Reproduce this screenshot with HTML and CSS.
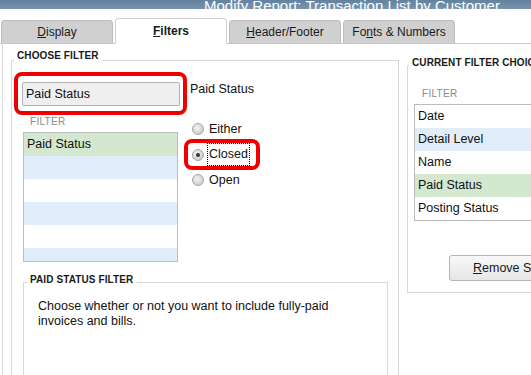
FILE: index.html
```html
<!DOCTYPE html>
<html lang="en">
<head>
 <meta charset="UTF-8">
 <meta name="viewport" content="width=device-width, initial-scale=1.0">
 <title>Modify Report: Transaction List by Customer</title>
 <link rel="stylesheet" href="styles.css">
</head>
<body>
 <div class="titlebar">
 <span class="title-text">Modify Report: Transaction List by Customer</span>
 </div>
 <div class="tabs">
 <div class="tab"><u>D</u>isplay</div>
 <div class="tab tab-active"><u>F</u>ilters</div>
 <div class="tab"><u>H</u>eader/Footer</div>
 <div class="tab">Fo<u>n</u>ts &amp; Numbers</div>
 </div>
 <div class="panel">
 <fieldset class="group group-choose">
 <legend class="group-title legend-choose">CHOOSE FILTER</legend>
 <div class="choose-top">
 <div class="highlight highlight-select">
 <div class="select-field">Paid Status</div>
 </div>
 <span class="select-caption">Paid Status</span>
 </div>
 <div class="choose-middle">
 <div class="filter-col">
 <div class="list-label">FILTER</div>
 <div class="list list-left">
 <div class="list-row row-selected">Paid Status</div>
 <div class="list-row row-alt"></div>
 <div class="list-row"></div>
 <div class="list-row row-alt"></div>
 <div class="list-row"></div>
 <div class="list-row row-alt"></div>
 </div>
 </div>
 <div class="radio-col">
 <label class="option">
 <span class="radio"></span>
 <span class="option-text">Either</span>
 </label>
 <div class="highlight highlight-radio">
 <label class="option option-plain">
 <span class="radio radio-checked"></span>
 <span class="option-text option-focus">Closed</span>
 </label>
 </div>
 <label class="option">
 <span class="radio"></span>
 <span class="option-text">Open</span>
 </label>
 </div>
 </div>
 <fieldset class="group group-detail">
 <legend class="group-title legend-detail">PAID STATUS FILTER</legend>
 <p class="detail-text">Choose whether or not you want to include fully-paid invoices and bills.</p>
 </fieldset>
 </fieldset>
 <fieldset class="group group-current">
 <legend class="group-title legend-current">CURRENT FILTER CHOICES</legend>
 <div class="current-body">
 <div class="list-label">FILTER</div>
 <div class="list list-right">
 <div class="list-row">Date</div>
 <div class="list-row row-alt">Detail Level</div>
 <div class="list-row">Name</div>
 <div class="list-row row-selected">Paid Status</div>
 <div class="list-row">Posting Status</div>
 </div>
 <button class="button"><u>R</u>emove Selected Filter</button>
 </div>
 </fieldset>
 </div>
</body>
</html>
```

FILE: styles.css
```css
* {
 margin: 0;
 padding: 0;
 box-sizing: border-box;
 font-family: "Liberation Sans", Arial, sans-serif;
}
body {
 width: 531px;
 height: 375px;
 overflow: hidden;
 background: #ffffff;
 color: #111111;
 font-size: 12px;
}
.titlebar {
 height: 9px;
 overflow: hidden;
 display: flex;
 align-items: flex-end;
 padding-left: 204px;
 background: linear-gradient(180deg, #6282a0 0%, #7894ad 100%);
}
.title-text {
 color: #ffffff;
 font-size: 15px;
 line-height: 15px;
 margin-bottom: -4px;
 white-space: nowrap;
}
.tabs {
 height: 35px;
 display: flex;
 align-items: flex-end;
 gap: 2px;
 padding-left: 1px;
 border-bottom: 1px solid #c9c9c9;
}
.tab {
 width: 112px;
 height: 23px;
 background: #d0d0d0;
 border: 1px solid #bdbdbd;
 border-bottom: none;
 border-radius: 4px 4px 0 0;
 text-align: center;
 font-size: 12px;
 line-height: 22px;
 color: #1a1a1a;
}
.tab-active {
 height: 26px;
 margin-bottom: -1px;
 background: #ffffff;
 border-color: #cfcfcf;
 font-weight: bold;
 line-height: 24px;
}
.panel {
 margin-left: 2px;
 height: 331px;
 border-left: 1px solid #d9d9d9;
 display: flex;
 align-items: flex-start;
 padding: 7px 0 0 8px;
}
.group {
 border: 1px solid #d9d9d9;
 min-width: 0;
}
.group-title {
 font-size: 10px;
 font-weight: bold;
 line-height: 10px;
 color: #1a1a1a;
 padding: 0 3px;
 letter-spacing: 0.1px;
}
.group-choose {
 width: 388px;
 height: 380px;
 flex-shrink: 0;
}
.legend-choose {
 margin-left: 2px;
 padding-bottom: 8px;
}
.choose-top {
 display: flex;
 align-items: flex-start;
 padding: 3px 0 0 2px;
}
.highlight {
 border: 4px solid #ee0000;
 border-radius: 8px;
}
.highlight-select {
 padding: 6px 3px 5px 4px;
}
.select-field {
 width: 158px;
 height: 24px;
 background: #efefef;
 border: 1px solid #b3b3b3;
 border-radius: 2px;
 padding-left: 3px;
 font-size: 12.5px;
 line-height: 22px;
}
.select-caption {
 margin: 10px 0 0 3px;
 font-size: 12.5px;
 line-height: 15px;
}
.choose-middle {
 display: flex;
 align-items: flex-start;
 margin-top: 1px;
 padding-left: 11px;
}
.list-label {
 font-size: 10px;
 line-height: 12px;
 color: #8a8a8a;
 padding-left: 7px;
 letter-spacing: 0.3px;
}
.list {
 border: 1px solid #bdbdbd;
 margin-top: 4px;
 overflow: hidden;
}
.list-left {
 width: 155px;
 height: 130px;
}
.list-row {
 height: 23px;
 padding-left: 3px;
 font-size: 12.5px;
 line-height: 23px;
 white-space: nowrap;
}
.row-alt {
 background: #e2edfb;
}
.row-selected {
 background: #d3e8cf;
}
.radio-col {
 display: flex;
 flex-direction: column;
 margin: 3px 0 0 6px;
}
.option {
 height: 20px;
 display: flex;
 align-items: center;
 gap: 5px;
 padding-left: 8px;
 font-size: 12.5px;
}
.option-plain {
 height: 23px;
 padding-left: 0;
}
.highlight-radio {
 width: 76px;
 height: 31px;
 padding-left: 4px;
}
.radio {
 width: 12px;
 height: 12px;
 border-radius: 50%;
 border: 1px solid #a3a3a3;
 background: radial-gradient(circle at 40% 40%, #f4f4f4 0%, #d6d6d6 60%, #c4c4c4 100%);
 display: flex;
 align-items: center;
 justify-content: center;
}
.radio-checked::after {
 content: "";
 width: 4px;
 height: 4px;
 border-radius: 50%;
 background: #333333;
}
.option-focus {
 outline: 1px dotted #000000;
 line-height: 21px;
 padding: 0 1px;
 margin-left: -1px;
}
.group-detail {
 width: 365px;
 height: 120px;
 margin: 13px 0 0 11px;
}
.legend-detail {
 margin-left: 3px;
 padding-bottom: 5px;
}
.detail-text {
 max-width: 310px;
 padding: 9px 0 0 14px;
 font-size: 12.5px;
 line-height: 15px;
}
.group-current {
 width: 170px;
 flex-shrink: 0;
 margin: 7px 0 0 8px;
}
.legend-current {
 margin-left: 1px;
 padding-bottom: 4px;
 white-space: nowrap;
}
.current-body {
 padding: 16px 0 11px 0;
}
.current-body .list-label {
 padding-left: 14px;
}
.list-right {
 width: 160px;
 margin-left: 6px;
 border-right: none;
}
.button {
 display: block;
 height: 26px;
 margin: 34px 0 0 41px;
 padding: 0 23px;
 background: linear-gradient(180deg, #f8f8f8 0%, #e6e6e6 100%);
 border: 1px solid #b5b5b5;
 border-radius: 3px;
 font-size: 12.5px;
 color: #1a1a1a;
 white-space: nowrap;
}
```
